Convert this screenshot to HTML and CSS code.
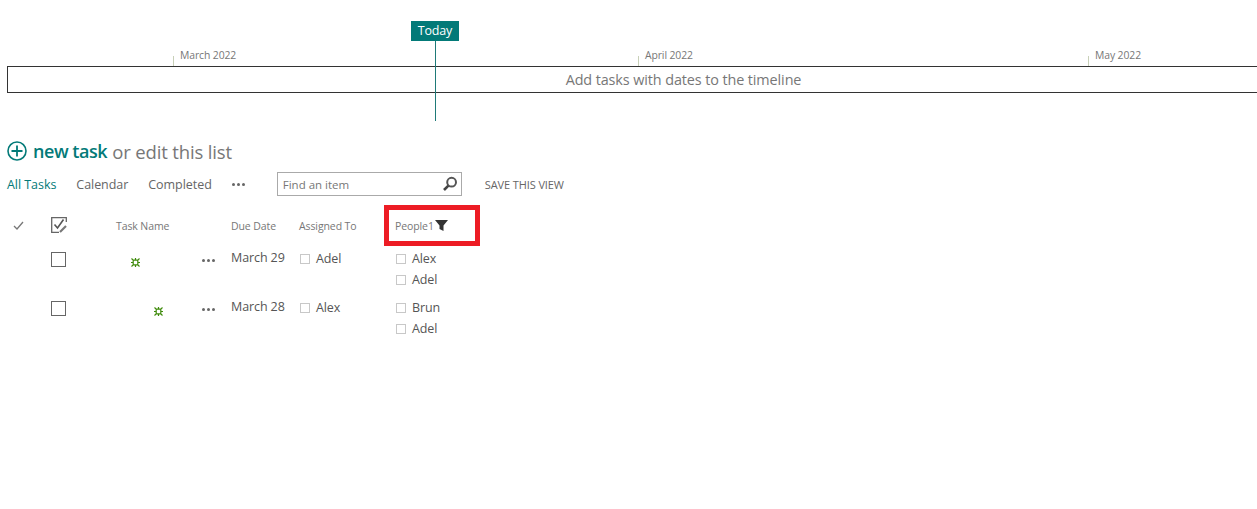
FILE: index.html
```html
<!DOCTYPE html>
<html lang="en">
<head>
<meta charset="utf-8">
<title>Tasks</title>
<link rel="stylesheet" href="styles.css">
</head>
<body>
<section class="timeline">
  <div class="today-flag">Today</div>
  <div class="today-line"></div>
  <div class="month month-mar">March 2022</div>
  <div class="month month-apr">April 2022</div>
  <div class="month month-may">May 2022</div>
  <div class="track">Add tasks with dates to the timeline</div>
</section>

<h1 class="heading">
  <svg class="plus" width="20" height="20" viewBox="0 0 20 20"><circle cx="10" cy="10" r="9" fill="none" stroke="#037a78" stroke-width="1.6"/><path d="M10 4.500v11M4.500 10h11" stroke="#037a78" stroke-width="1.800" fill="none"/></svg>
  <span class="new">new task</span>
  <span class="rest">or edit this list</span>
</h1>

<nav class="views">
  <span class="view view-active">All Tasks</span>
  <span class="view">Calendar</span>
  <span class="view">Completed</span>
  <span class="view-more"><i></i><i></i><i></i></span>
  <div class="search">
    <span>Find an item</span>
    <svg width="16" height="16" viewBox="0 0 16 16"><circle cx="9.600" cy="6.200" r="4.400" fill="none" stroke="#555" stroke-width="2"/><path d="M6.400 9.600L2 14" stroke="#444" stroke-width="2.600" fill="none"/></svg>
  </div>
  <span class="save">SAVE THIS VIEW</span>
</nav>

<div class="row head">
  <div class="c-mark"><svg width="11" height="9" viewBox="0 0 11 9"><path d="M1 5l3 3 6-7" fill="none" stroke="#777" stroke-width="1.300"/></svg></div>
  <div class="c-box"><svg class="box-all" width="16" height="16" viewBox="0 0 16 16"><path d="M15.300 5V.7H.7v14.600H8" fill="none" stroke="#666" stroke-width="1.300"/><path d="M3.500 7.500l3 3.500 6-8.500" fill="none" stroke="#555" stroke-width="1.600"/><path d="M9 15l6-6" stroke="#777" stroke-width="2.200" fill="none"/></svg></div>
  <div class="c-task">Task Name</div>
  <div class="c-dots"></div>
  <div class="c-due">Due Date</div>
  <div class="c-asg">Assigned To</div>
  <div class="c-ppl">People1<svg class="funnel" width="13" height="11" viewBox="0 0 13 11"><path d="M0 0h13L8.500 5.500V11L4.500 9V5.500z" fill="#333"/></svg><span class="highlight"></span></div>
</div>

<div class="row item">
  <div class="c-mark"></div>
  <div class="c-box"><span class="box"></span></div>
  <div class="c-task"><svg class="new-mark mark-a" width="9" height="9" viewBox="0 0 9 9"><path d="M2.200 2.200h4.600v4.600H2.200zM.5 .5l1.700 1.700M8.500 .5L6.800 2.200M.5 8.500l1.700-1.700M8.500 8.500L6.800 6.800M4.500 0v2M4.500 7v2M0 4.500h2M7 4.500h2" fill="none" stroke="#3e8a0a" stroke-width="1.200"/></svg></div>
  <div class="c-dots"><i></i><i></i><i></i></div>
  <div class="c-due">March 29</div>
  <div class="c-asg"><span class="person"><span class="presence"></span>Adel</span></div>
  <div class="c-ppl"><span class="person"><span class="presence"></span>Alex</span><span class="person"><span class="presence"></span>Adel</span></div>
</div>

<div class="row item">
  <div class="c-mark"></div>
  <div class="c-box"><span class="box"></span></div>
  <div class="c-task"><svg class="new-mark mark-b" width="9" height="9" viewBox="0 0 9 9"><path d="M2.200 2.200h4.600v4.600H2.200zM.5 .5l1.700 1.700M8.500 .5L6.800 2.200M.5 8.500l1.700-1.700M8.500 8.500L6.800 6.800M4.500 0v2M4.500 7v2M0 4.500h2M7 4.500h2" fill="none" stroke="#3e8a0a" stroke-width="1.200"/></svg></div>
  <div class="c-dots"><i></i><i></i><i></i></div>
  <div class="c-due">March 28</div>
  <div class="c-asg"><span class="person"><span class="presence"></span>Alex</span></div>
  <div class="c-ppl"><span class="person"><span class="presence"></span>Brun</span><span class="person"><span class="presence"></span>Adel</span></div>
</div>
</body>
</html>
```
FILE: styles.css
```css
* { box-sizing: border-box; }
html, body { margin: 0; padding: 0; background: #fff; overflow: hidden; }
body { width: 1257px; height: 509px; font-family: "Open Sans", "Noto Sans", sans-serif; color: #444; }

.timeline { position: relative; height: 121px; padding: 66px 0 0 7px; overflow: hidden; }
.track { height: 27px; width: 1352px; border: 1px solid #333; border-right: 0; text-align: center; font-size: 14.400px; line-height: 25px; color: #777; letter-spacing: -0.1px; }
.today-flag { position: absolute; left: 411px; top: 21px; width: 48px; height: 20px; background: #037a78; color: #fff; font-size: 12.500px; line-height: 20px; text-align: center; letter-spacing: -0.2px; }
.today-line { position: absolute; left: 435px; top: 41px; width: 1px; height: 80px; background: #1f7a78; z-index: 1; }
.month { position: absolute; top: 47px; height: 19px; font-size: 10.400px; line-height: 17px; color: #777; padding-left: 7px; letter-spacing: -0.1px; }
.month::before { content: ""; position: absolute; left: 0; top: 9px; width: 1px; height: 10px; background: #c8d0b8; }
.month-mar { left: 173px; }
.month-apr { left: 638px; }
.month-may { left: 1088px; }

.heading { display: flex; align-items: center; margin: 20px 0 0 7px; height: 20px; font-size: 18px; font-weight: 400; white-space: nowrap; }
.plus { margin-right: 6px; }
.new { color: #037a78; font-weight: 600; letter-spacing: -0.45px; margin-right: 5px; }
.rest { color: #777; font-size: 18.500px; letter-spacing: -0.15px; }

.views { display: flex; align-items: center; height: 24px; margin: 11px 0 0 7px; font-size: 12.500px; color: #666; white-space: nowrap; }
.view { margin-right: 20px; letter-spacing: -0.05px; }
.view-active { color: #037a78; }
.view-more { display: flex; gap: 2px; width: 14px; margin-right: 31px; }
.view-more i, .c-dots i { display: block; width: 3px; height: 3px; border-radius: 50%; background: #666; }
.search { display: flex; align-items: center; justify-content: space-between; width: 185px; height: 24px; border: 1px solid #aaa; padding: 0 3px 0 5px; font-size: 11.500px; color: #777; margin-right: 23px; }
.save { font-size: 11px; color: #666; letter-spacing: -0.1px; }

.row { display: flex; }
.head { height: 42px; margin-top: 9px; align-items: center; font-size: 10.500px; color: #777; letter-spacing: -0.1px; }
.item { height: 49px; font-size: 12.500px; color: #555; letter-spacing: -0.1px; padding-top: 2px; }
.c-mark { width: 51px; padding-left: 13px; }
.c-box { width: 65px; }
.c-task { width: 75px; position: relative; }
.c-dots { width: 40px; display: flex; gap: 2px; padding: 10px 0 0 11px; }
.c-due { width: 68px; white-space: nowrap; }
.c-asg { width: 96px; white-space: nowrap; }
.c-ppl { position: relative; display: flex; align-items: center; white-space: nowrap; }
.head .c-mark svg, .head .c-box svg { display: block; }
.head .c-mark, .head .c-box { padding-bottom: 2px; }
.funnel { margin-left: 1px; margin-bottom: 2px; }
.highlight { position: absolute; left: -11px; top: 0; width: 96px; height: 41px; border: 5px solid #ed1c24; }
.head .c-ppl { height: 41px; padding-top: 1px; align-self: flex-start; }
.item .c-ppl { flex-direction: column; align-items: flex-start; }
.item .c-asg, .item .c-ppl { margin-top: -1px; }
.box { display: block; width: 15px; height: 15px; border: 1.500px solid #666; margin-top: 3px; }
.new-mark { position: absolute; top: 9px; }
.mark-a { left: 15px; }
.mark-b { left: 38px; }
.person { display: flex; align-items: center; height: 21px; }
.presence { width: 10px; height: 10px; border: 1px solid #c8c8c8; margin: 1px 6px 0 1px; }
```
